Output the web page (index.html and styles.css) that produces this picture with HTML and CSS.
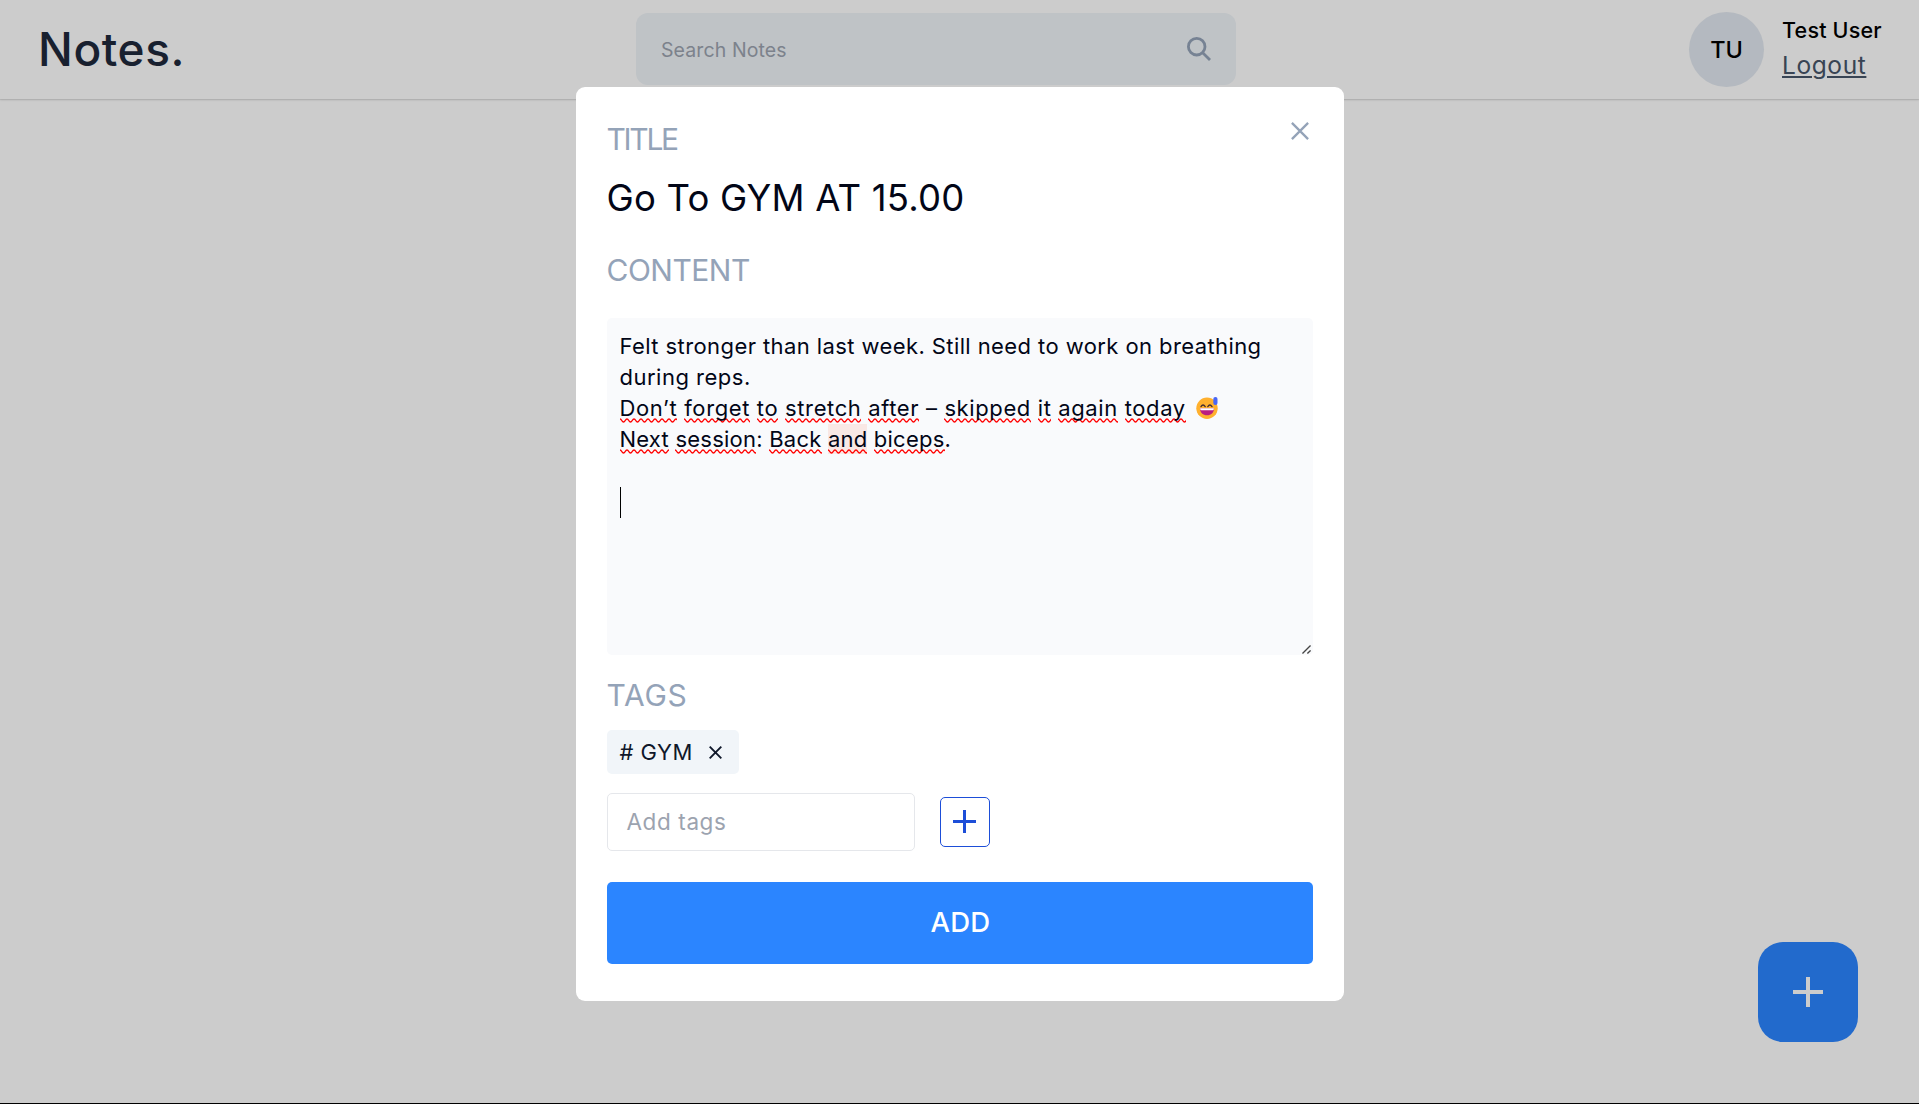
FILE: index.html
```html
<!DOCTYPE html>
<html lang="en">
<head>
<meta charset="utf-8">
<title>Notes</title>
<link rel="stylesheet" href="styles.css">
</head>
<body>
<div class="app">
  <header class="navbar">
    <h1 class="brand">Notes.</h1>
    <div class="search">
      <span class="search-text">Search Notes</span>
      <svg class="search-icon" viewBox="0 0 24 24"><circle cx="9.7" cy="9.7" r="8.3"/><path d="M15.7 15.7L23 23"/></svg>
    </div>
    <div class="profile">
      <div class="avatar">TU</div>
      <div class="who">
        <span class="name">Test User</span>
        <a class="logout">Logout</a>
      </div>
    </div>
  </header>
  <button class="fab" aria-label="New note"><svg viewBox="0 0 30 30"><path d="M15 0V30M0 15H30"/></svg></button>
</div>
<div class="overlay">
  <section class="modal">
    <button class="close" aria-label="Close"><svg viewBox="0 0 18 18"><path d="M.9 .9L17.1 17.1M17.1 .9L.9 17.1"/></svg></button>
    <label class="label label-title">TITLE</label>
    <div class="title">Go To GYM AT 15.00</div>
    <label class="label label-content">CONTENT</label>
    <div class="editor">
      <p class="line-a">Felt stronger than last week. Still need to work on breathing</p>
      <p class="line-b">during reps.</p>
      <p class="line-c"><u>Don’t</u> <u>forget</u> <u>to</u> <u>stretch</u> <u>after</u> – <u>skipped</u> <u>it</u> <u>again</u> <u>today</u><svg class="emoji" viewBox="0 0 22 22"><circle cx="11" cy="11.2" r="10.7" fill="#ffb02e"/><path d="M5 9.6q2-3.2 4.200 0M11.800 9.600q2-3.200 4.200 0" fill="none" stroke="#402a32" stroke-width="1.300" stroke-linecap="round"/><path d="M4 11.200h14c0 4.400-3 7-7 7s-7-2.600-7-7z" fill="#bb1d80"/><path d="M4.200 11.200h13.600v.8q0 1.200-1.200 1.200H5.400q-1.200 0-1.200-1.200z" fill="#fff"/><rect x="17.300" y="0" width="4.200" height="8" rx="2" fill="#4a66f5"/></svg></p>
      <p class="line-d"><u>Next</u> <u>session</u>: <u>Back</u> <u class="hit">and</u> <u>biceps</u>.</p>
      <p></p>
      <p><span class="caret"></span></p>
      <svg class="grip" viewBox="0 0 10 10"><path d="M.5 9.500L9.500 .5M6 9.500L9.500 6"/></svg>
    </div>
    <label class="label label-tags">TAGS</label>
    <div class="tags">
      <span class="chip"># GYM<svg viewBox="0 0 13 13"><path d="M.7 .7L12.300 12.300M12.300 .7L.7 12.300"/></svg></span>
    </div>
    <div class="add-tag">
      <div class="tag-input">Add tags</div>
      <button class="tag-add" aria-label="Add tag"><svg viewBox="0 0 23 23"><path d="M11.500 0V23M0 11.500H23"/></svg></button>
    </div>
    <button class="submit">ADD</button>
  </section>
</div>
</body>
</html>
```
FILE: styles.css
```css
* { box-sizing: border-box; margin: 0; padding: 0; }
body { font-family: Inter, "Liberation Sans", sans-serif; color: #020617; background: #fff; overflow: hidden; }
button { border: 0; background: none; font-family: inherit; display: flex; align-items: center; justify-content: center; }
svg { display: block; fill: none; stroke: currentColor; }

.app { height: 1104px; border-bottom: 1px solid #000; }
.navbar { display: flex; align-items: center; height: 99px; padding: 0 38px; background: #fff; box-shadow: 0 1px 2px rgba(0,0,0,.12), 0 1px 1px rgba(0,0,0,.06); }
.brand { flex: 0 0 598px; padding-bottom: 2px; font-size: 46px; font-weight: 500; line-height: 60px; letter-spacing: .6px; color: #1e293b; }
.search { display: flex; align-items: center; justify-content: space-between; width: 600px; height: 72px; margin-top: -1px; padding: 0 25px; border-radius: 12px; background: #eff4f8; }
.search-text { padding-top: 1px; font-size: 19.5px; letter-spacing: .1px; color: #9ca3af; }
.search-icon { width: 24px; height: 24px; stroke-width: 2.8; color: #94a3b8; }
.profile { display: flex; align-items: center; gap: 18px; margin-left: auto; }
.avatar { display: flex; align-items: center; justify-content: center; width: 75px; height: 75px; padding-bottom: 1px; border-radius: 50%; background: #e2e8f0; font-size: 23.5px; font-weight: 500; color: #000; }
.who { width: 99px; white-space: nowrap; }
.name { display: block; margin-top: -1px; padding-bottom: 1px; font-size: 21.5px; font-weight: 500; line-height: 30px; letter-spacing: .2px; color: #000; }
.logout { display: block; font-size: 24.5px; line-height: 38px; letter-spacing: .6px; color: #475569; text-decoration: underline; text-decoration-thickness: 2px; text-underline-offset: 2px; }
.fab { position: absolute; left: 1758px; top: 942px; width: 100px; height: 100px; border-radius: 25px; background: #2b85ff; color: #fff; }
.fab svg { width: 30px; height: 30px; stroke-width: 4; }

.overlay { position: absolute; inset: 0 0 1px; display: flex; justify-content: center; align-items: flex-start; padding-top: 87px; background: rgba(0,0,0,.2); }
.modal { position: relative; width: 768px; height: 914px; padding: 32px 31px 37px; border-radius: 9px; background: #fff; }
.close { position: absolute; right: 35px; top: 35px; color: #94a3b8; }
.close svg { width: 18px; height: 18px; stroke-width: 2.3; }

.label { display: block; font-size: 30px; line-height: 40px; color: #94a3b8; }
.label-title { letter-spacing: -2.3px; }
.label-content { margin-top: 24px; letter-spacing: -.5px; }
.label-tags { margin-top: 20px; letter-spacing: .7px; }
.title { margin-top: 12px; padding-bottom: 1px; font-size: 36.5px; line-height: 54px; letter-spacing: .2px; }

.editor { position: relative; height: 337px; margin-top: 28px; padding: 12.5px 12px 12px 13px; border-radius: 5px; background: #f9fafc; font-size: 22px; line-height: 31.25px; white-space: nowrap; }
.editor p { height: 31.25px; }
.editor u { padding-bottom: 2px; text-decoration: none; background: url("data:image/svg+xml,%3Csvg xmlns='http://www.w3.org/2000/svg' width='7' height='5'%3E%3Cpath d='M-1.750 2.500Q0-.5 1.750 2.500T5.250 2.500T8.750 2.500' fill='none' stroke='red' stroke-width='1.400'/%3E%3C/svg%3E") left bottom repeat-x; }
.line-a { letter-spacing: .41px; }
.line-b { letter-spacing: .5px; }
.line-c { letter-spacing: .61px; }
.line-d { letter-spacing: .23px; }
.editor .hit { padding-top: 2px; background-color: #f9e8e5; }
.emoji { display: inline-block; width: 22px; height: 22px; margin-left: 10px; vertical-align: -3px; stroke: none; }
.caret { display: block; width: 1px; height: 31px; background: #000; }
.grip { position: absolute; right: 2px; bottom: 1px; width: 9px; height: 9px; color: #444; stroke-width: 1.5; }

.tags { display: flex; margin-top: 15px; }
.chip { display: flex; align-items: center; justify-content: space-between; width: 132px; height: 44px; padding: 0 17px 0 13px; border-radius: 5px; background: #f1f5f9; font-size: 22px; letter-spacing: .5px; color: #0f172a; }
.chip svg { width: 13px; height: 13px; stroke-width: 1.9; }
.add-tag { display: flex; align-items: center; gap: 25px; margin-top: 19px; }
.tag-input { display: flex; align-items: center; width: 308px; height: 58px; padding: 0 0 2px 19px; border: 1px solid #e5e7eb; border-radius: 5px; font-size: 22.5px; letter-spacing: .6px; color: #9ca3af; }
.tag-add { width: 50px; height: 50px; padding-bottom: 1px; border: 1px solid #1d4ed8; border-radius: 5px; color: #1d4ed8; }
.tag-add svg { width: 23px; height: 23px; stroke-width: 3; }
.submit { width: 100%; height: 82px; margin-top: 31px; padding: 0 0 2px 2px; border-radius: 5px; background: #2b85ff; font-size: 27.5px; font-weight: 500; letter-spacing: .2px; color: #fff; }
```
